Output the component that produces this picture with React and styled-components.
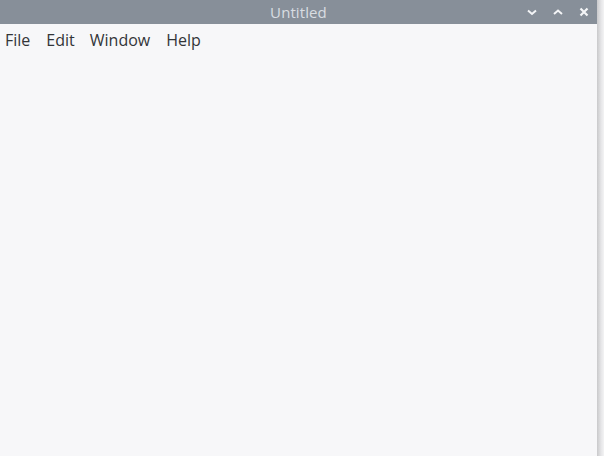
import React from "react";
import styled, { createGlobalStyle } from "styled-components";

const Global = createGlobalStyle`
    html, body {
        margin: 0;
        padding: 0;
        background: #f2f2f3;
    }
`;

const Screen = styled.div`
    width: 604px;
    height: 456px;
    display: flex;
    overflow: hidden;
`;

const Window = styled.div`
    width: 597px;
    height: 456px;
    display: flex;
    flex-direction: column;
    background-color: #f7f7f9;
    font-family: "Open Sans", "Noto Sans", sans-serif;
`;

const Shadow = styled.div`
    flex: 1;
    background: linear-gradient(to right, #c9c9cb, #e6e6e8 60%, #f3f3f4);
`;

const TitleBar = styled.div`
    height: 24px;
    background-color: #878f99;
    display: flex;
    align-items: center;
    justify-content: center;
    position: relative;
`;

const Title = styled.div`
    color: #d9dde2;
    font-size: 15px;
    letter-spacing: 0.1px;
`;

const Controls = styled.div`
    position: absolute;
    right: 7px;
    top: 0;
    height: 24px;
    display: flex;
    align-items: center;
    gap: 14px;
`;

const Control = styled.svg`
    width: 12px;
    height: 12px;
    display: block;
`;

const MenuBar = styled.div`
    height: 32px;
    display: flex;
    align-items: center;
    padding-left: 5px;
`;

const MenuItem = styled.div`
    font-size: 16px;
    color: #333538;
    margin-right: ${(p) => p.gap}px;
`;

export default function App() {
    return (
        <Screen>
            <Global />
            <Window>
                <TitleBar>
                    <Title>Untitled</Title>
                    <Controls>
                        <Control viewBox="0 0 12 12">
                            <path d="M2 4.5 L6 8 L10 4.5" fill="none" stroke="#f4f5f7" strokeWidth="2" />
                        </Control>
                        <Control viewBox="0 0 12 12">
                            <path d="M2 8 L6 4.5 L10 8" fill="none" stroke="#f4f5f7" strokeWidth="2" />
                        </Control>
                        <Control viewBox="0 0 12 12">
                            <path d="M2.5 2.5 L9.5 9.5 M9.5 2.5 L2.5 9.5" fill="none" stroke="#f4f5f7" strokeWidth="2.2" />
                        </Control>
                    </Controls>
                </TitleBar>
                <MenuBar>
                    <MenuItem gap={16}>File</MenuItem>
                    <MenuItem gap={15}>Edit</MenuItem>
                    <MenuItem gap={16}>Window</MenuItem>
                    <MenuItem gap={0}>Help</MenuItem>
                </MenuBar>
            </Window>
            <Shadow />
        </Screen>
    );
}
